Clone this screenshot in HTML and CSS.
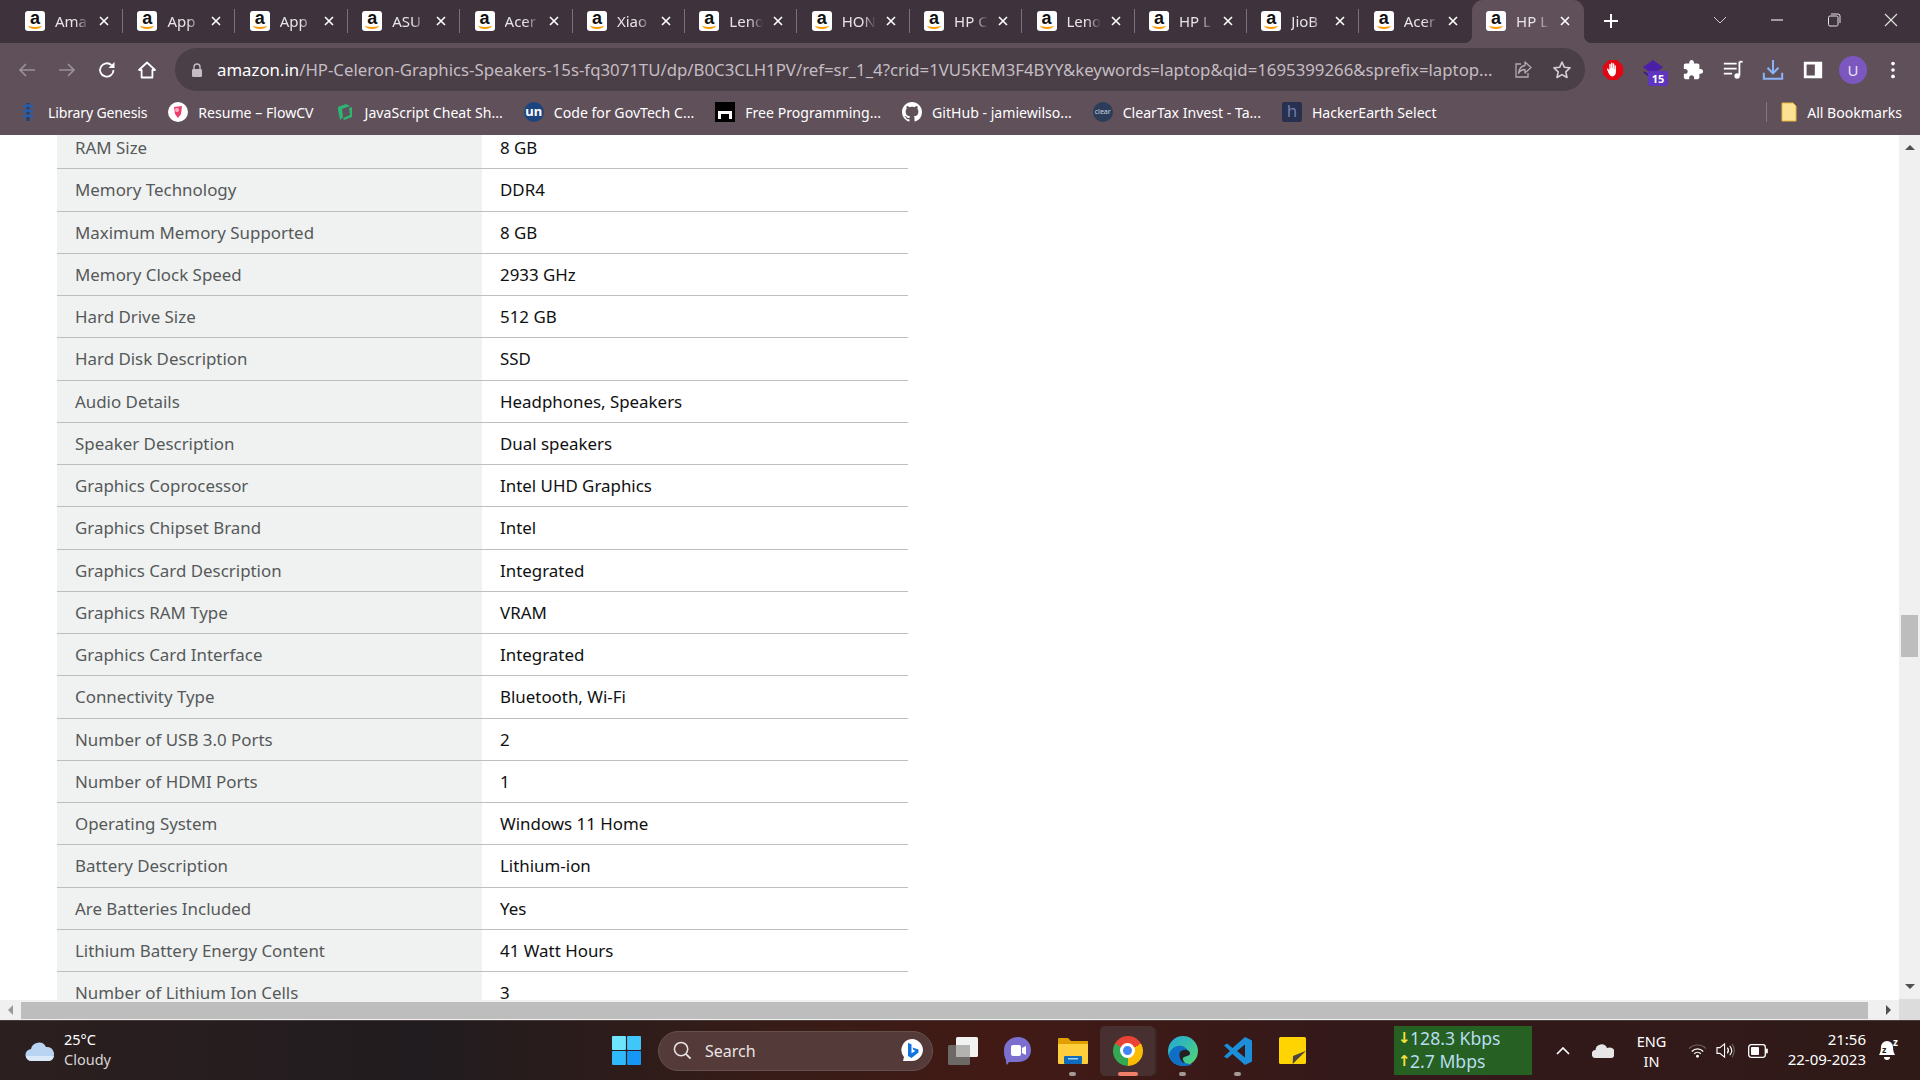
FILE: index.html
```html
<!DOCTYPE html>
<html lang="en">
<head>
    <title>HP Laptop - Technical Details</title>
    <link rel="stylesheet" href="styles.css">
</head>
<body>

    <svg class="sprites" width="0" height="0">
        <symbol id="cross" viewBox="0 0 10 10">
            <path d="M1 1l8 8M9 1l-8 8" stroke="#fff" stroke-width="1.6" fill="none"/>
        </symbol>
    </svg>

    <div class="tabstrip">
        <div class="tab"><div class="tab-icon">a</div><span class="tab-title">Ama</span><svg class="tab-x"><use href="#cross"/></svg></div>
        <div class="tab"><div class="tab-icon">a</div><span class="tab-title">App</span><svg class="tab-x"><use href="#cross"/></svg></div>
        <div class="tab"><div class="tab-icon">a</div><span class="tab-title">App</span><svg class="tab-x"><use href="#cross"/></svg></div>
        <div class="tab"><div class="tab-icon">a</div><span class="tab-title">ASU</span><svg class="tab-x"><use href="#cross"/></svg></div>
        <div class="tab"><div class="tab-icon">a</div><span class="tab-title">Acer</span><svg class="tab-x"><use href="#cross"/></svg></div>
        <div class="tab"><div class="tab-icon">a</div><span class="tab-title">Xiao</span><svg class="tab-x"><use href="#cross"/></svg></div>
        <div class="tab"><div class="tab-icon">a</div><span class="tab-title">Leno</span><svg class="tab-x"><use href="#cross"/></svg></div>
        <div class="tab"><div class="tab-icon">a</div><span class="tab-title">HON</span><svg class="tab-x"><use href="#cross"/></svg></div>
        <div class="tab"><div class="tab-icon">a</div><span class="tab-title">HP C</span><svg class="tab-x"><use href="#cross"/></svg></div>
        <div class="tab"><div class="tab-icon">a</div><span class="tab-title">Leno</span><svg class="tab-x"><use href="#cross"/></svg></div>
        <div class="tab"><div class="tab-icon">a</div><span class="tab-title">HP L</span><svg class="tab-x"><use href="#cross"/></svg></div>
        <div class="tab"><div class="tab-icon">a</div><span class="tab-title">JioB</span><svg class="tab-x"><use href="#cross"/></svg></div>
        <div class="tab no-line"><div class="tab-icon">a</div><span class="tab-title">Acer</span><svg class="tab-x"><use href="#cross"/></svg></div>
        <div class="tab active"><div class="tab-icon">a</div><span class="tab-title">HP L</span><svg class="tab-x"><use href="#cross"/></svg></div>
        <svg class="new-tab" viewBox="0 0 16 16"><path d="M8 1v14M1 8h14" stroke="#fff" stroke-width="2"/></svg>
        <div class="window-btns">
            <svg class="win-btn" viewBox="0 0 14 14"><path d="M1 4l6 6 6-6" stroke="#cfc8cd" fill="none"/></svg>
            <svg class="win-btn" viewBox="0 0 14 14"><path d="M1 7h12" stroke="#e6e2e5" stroke-width="1.2" fill="none"/></svg>
            <svg class="win-btn" viewBox="0 0 14 14"><rect x="1.5" y="3" width="9.5" height="10" rx="1.5" stroke="#e6e2e5" fill="none"/><path d="M4 1h7a2 2 0 012 2v7" stroke="#e6e2e5" fill="none"/></svg>
            <svg class="win-btn" viewBox="0 0 14 14"><path d="M1 1l12 12M13 1L1 13" stroke="#e6e2e5" stroke-width="1.1" fill="none"/></svg>
        </div>
    </div>

    <div class="toolbar">
        <div class="nav-btns">
            <svg class="nav-icon" viewBox="0 0 20 20"><path d="M18 10H3M9 4l-6 6 6 6" stroke="#9b9098" stroke-width="1.7" fill="none"/></svg>
            <svg class="nav-icon" viewBox="0 0 20 20"><path d="M2 10h15M11 4l6 6-6 6" stroke="#9b9098" stroke-width="1.7" fill="none"/></svg>
            <svg class="nav-icon" viewBox="0 0 20 20"><path d="M16.5 10a6.7 6.7 0 11-2-4.8" stroke="#fff" stroke-width="1.8" fill="none"/><path d="M17.5 2v6h-6z" fill="#fff"/></svg>
            <svg class="nav-icon" viewBox="0 0 20 20"><path d="M10 2.5L2 10h2.6v7.5h10.8V10H18z" stroke="#fff" stroke-width="1.8" fill="none" stroke-linejoin="round"/></svg>
        </div>
        <div class="omnibox">
            <svg class="lock" viewBox="0 0 12 14"><path d="M3 6V4a3 3 0 016 0v2" stroke="#c4bdc2" stroke-width="1.4" fill="none"/><rect x="1" y="6" width="10" height="8" rx="1.2" fill="#c4bdc2"/></svg>
            <div class="url"><span class="url-host">amazon.in</span>/HP-Celeron-Graphics-Speakers-15s-fq3071TU/dp/B0C3CLH1PV/ref=sr_1_4?crid=1VU5KEM3F4BYY&amp;keywords=laptop&amp;qid=1695399266&amp;sprefix=laptop...</div>
            <svg class="omni-icon share" viewBox="0 0 20 20"><path d="M8 4H3v13h12v-4" stroke="#b3abb0" stroke-width="1.3" fill="none"/><path d="M12 2l6 5.500-6 5.500V9.500c-3 0-5 1-6.500 4C6 9 8 6 12 5.500z" stroke="#b3abb0" stroke-width="1.3" fill="none" stroke-linejoin="round"/></svg>
            <svg class="omni-icon" viewBox="0 0 20 20"><path d="M10 2l2.400 5.300 5.600.6-4.200 3.900 1.200 5.700L10 14.600 5 17.500l1.200-5.700L2 7.900l5.600-.6z" stroke="#d6d0d4" stroke-width="1.6" fill="none" stroke-linejoin="round"/></svg>
        </div>
        <div class="ext-btns">
            <svg class="ext" viewBox="0 0 24 24"><path d="M7.500 1h9L23 7.500v9L16.500 23h-9L1 16.500v-9z" fill="#e30613"/><path d="M8 17c-1-2-2-4-2.500-5.500-.3-1 1-1.500 1.500-.5l1 1.500V6c0-1.200 1.500-1.200 1.500 0v4h.4V4.800c0-1.200 1.600-1.200 1.600 0V10h.4V5.500c0-1.200 1.500-1.200 1.500 0V11h.4V7.500c0-1 1.400-1 1.400 0V14c0 3-1.500 5-4 5-1.400 0-2.500-.7-3.200-2z" fill="#fff"/></svg>
            <div class="ext ext-stack">
                <svg class="stack-icon" viewBox="0 0 24 24"><path d="M12 1l11 8-11 8L1 9z" fill="#4b1fa8"/><path d="M2 13l10 7 5-3.500V21l-5 2-10-8z" fill="#35169a"/></svg>
                <span class="ext-badge">15</span>
            </div>
            <svg class="ext" viewBox="0 0 24 24"><path fill="#fff" d="M20.500 11H19V7c0-1.100-.9-2-2-2h-4V3.500C13 2.120 11.880 1 10.500 1S8 2.120 8 3.500V5H4c-1.100 0-1.990.9-1.990 2v3.800H3.500c1.490 0 2.700 1.210 2.700 2.700s-1.210 2.700-2.700 2.700H2V20c0 1.100.9 2 2 2h3.800v-1.500c0-1.490 1.210-2.700 2.700-2.700 1.490 0 2.700 1.210 2.700 2.700V22H17c1.100 0 2-.9 2-2v-4h1.500c1.380 0 2.500-1.120 2.500-2.500S21.880 11 20.500 11z"/></svg>
            <svg class="ext" viewBox="0 0 24 24"><path d="M2 5h14M2 10.500h14M2 16h9" stroke="#fff" stroke-width="2" fill="none"/><path d="M19 3v15" stroke="#fff" stroke-width="2"/><path d="M19 3h3.500" stroke="#fff" stroke-width="2"/><circle cx="16.500" cy="18.500" r="3" fill="#fff"/></svg>
            <svg class="ext" viewBox="0 0 24 24"><path d="M12 1v14M6 9.500l6 6 6-6" stroke="#8ab4f8" stroke-width="2.200" fill="none"/><path d="M2 15v6.500h20V15" stroke="#8ab4f8" stroke-width="2.200" fill="none"/></svg>
            <svg class="ext" viewBox="0 0 24 24"><rect x="2" y="3" width="20" height="18" fill="#fff"/><rect x="5" y="6" width="9" height="12" fill="#5f505a"/></svg>
            <div class="ext avatar">U</div>
            <svg class="ext" viewBox="0 0 24 24"><circle cx="12" cy="5" r="2" fill="#fff"/><circle cx="12" cy="12" r="2" fill="#fff"/><circle cx="12" cy="19" r="2" fill="#fff"/></svg>
        </div>
    </div>

    <div class="bookmarks">
        <div class="bm bm-first">
            <svg class="bm-icon" viewBox="0 0 20 20"><path d="M10 1v18" stroke="#1c3f7a" stroke-width="3"/><path d="M5 5c4-3 7-1 10 0M5 10c4-3 7-1 10 0M5 15c4-3 7-1 10 0" stroke="#2a5ea8" stroke-width="2.500" fill="none"/></svg>
            <span>Library Genesis</span>
        </div>
        <div class="bm">
            <svg class="bm-icon" viewBox="0 0 20 20"><circle cx="10" cy="10" r="10" fill="#fff"/><path d="M6 5l8-1-1 8-3 4-3-4z" fill="#ee3e6d"/><circle cx="9" cy="8" r="2" fill="#fbb4c6"/></svg>
            <span>Resume – FlowCV</span>
        </div>
        <div class="bm">
            <svg class="bm-icon" viewBox="0 0 20 20"><path d="M3 5l8-3 4 2-8 3 1 8-3 3-2-10zM17 15l-8 3-1-2 7-3-1-7 3-1z" fill="#2bb673"/></svg>
            <span>JavaScript Cheat Sh...</span>
        </div>
        <div class="bm">
            <div class="bm-icon bm-un">un</div>
            <span>Code for GovTech C...</span>
        </div>
        <div class="bm">
            <svg class="bm-icon" viewBox="0 0 20 20"><rect width="20" height="20" fill="#000"/><path d="M3 9h14v8h-3v-5H6v5H3z" fill="#fff"/></svg>
            <span>Free Programming...</span>
        </div>
        <div class="bm">
            <svg class="bm-icon" viewBox="0 0 16 16"><path fill="#fff" d="M8 0C3.580 0 0 3.580 0 8c0 3.540 2.290 6.530 5.470 7.590.4.070.55-.17.55-.38 0-.19-.01-.82-.01-1.490-2.010.37-2.530-.49-2.690-.94-.09-.23-.48-.94-.82-1.130-.28-.15-.68-.52-.01-.53.63-.01 1.080.58 1.230.82.720 1.210 1.870.87 2.330.66.070-.52.280-.87.510-1.070-1.780-.2-3.640-.89-3.640-3.950 0-.87.310-1.590.820-2.150-.08-.2-.36-1.020.080-2.120 0 0 .670-.21 2.200.82.640-.18 1.320-.27 2-.27.680 0 1.360.090 2 .270 1.530-1.040 2.200-.82 2.200-.82.440 1.100.160 1.920.080 2.120.510.560.820 1.270.820 2.150 0 3.070-1.870 3.750-3.650 3.950.290.250.540.730.540 1.480 0 1.070-.01 1.930-.01 2.200 0 .210.150.460.550.380A8.013 8.013 0 0016 8c0-4.420-3.580-8-8-8z"/></svg>
            <span>GitHub - jamiewilso...</span>
        </div>
        <div class="bm">
            <div class="bm-icon bm-clear">clear</div>
            <span>ClearTax Invest - Ta...</span>
        </div>
        <div class="bm">
            <div class="bm-icon bm-h">h</div>
            <span>HackerEarth Select</span>
        </div>
        <div class="bm bm-all">
            <svg class="bm-folder" viewBox="0 0 16 20"><path d="M1 1h11l3 3v15H1z" fill="#fde293" stroke="#e8b93c"/></svg>
            <span>All Bookmarks</span>
        </div>
    </div>

    <div class="page">
        <div class="page-main">
            <div class="viewport">
                <div class="specs">
                    <div class="spec-row"><div class="spec-name">RAM Size</div><div class="spec-value">8 GB</div></div>
                    <div class="spec-row"><div class="spec-name">Memory Technology</div><div class="spec-value">DDR4</div></div>
                    <div class="spec-row"><div class="spec-name">Maximum Memory Supported</div><div class="spec-value">8 GB</div></div>
                    <div class="spec-row"><div class="spec-name">Memory Clock Speed</div><div class="spec-value">2933 GHz</div></div>
                    <div class="spec-row"><div class="spec-name">Hard Drive Size</div><div class="spec-value">512 GB</div></div>
                    <div class="spec-row"><div class="spec-name">Hard Disk Description</div><div class="spec-value">SSD</div></div>
                    <div class="spec-row"><div class="spec-name">Audio Details</div><div class="spec-value">Headphones, Speakers</div></div>
                    <div class="spec-row"><div class="spec-name">Speaker Description</div><div class="spec-value">Dual speakers</div></div>
                    <div class="spec-row"><div class="spec-name">Graphics Coprocessor</div><div class="spec-value">Intel UHD Graphics</div></div>
                    <div class="spec-row"><div class="spec-name">Graphics Chipset Brand</div><div class="spec-value">Intel</div></div>
                    <div class="spec-row"><div class="spec-name">Graphics Card Description</div><div class="spec-value">Integrated</div></div>
                    <div class="spec-row"><div class="spec-name">Graphics RAM Type</div><div class="spec-value">VRAM</div></div>
                    <div class="spec-row"><div class="spec-name">Graphics Card Interface</div><div class="spec-value">Integrated</div></div>
                    <div class="spec-row"><div class="spec-name">Connectivity Type</div><div class="spec-value">Bluetooth, Wi-Fi</div></div>
                    <div class="spec-row"><div class="spec-name">Number of USB 3.0 Ports</div><div class="spec-value">2</div></div>
                    <div class="spec-row"><div class="spec-name">Number of HDMI Ports</div><div class="spec-value">1</div></div>
                    <div class="spec-row"><div class="spec-name">Operating System</div><div class="spec-value">Windows 11 Home</div></div>
                    <div class="spec-row"><div class="spec-name">Battery Description</div><div class="spec-value">Lithium-ion</div></div>
                    <div class="spec-row"><div class="spec-name">Are Batteries Included</div><div class="spec-value">Yes</div></div>
                    <div class="spec-row"><div class="spec-name">Lithium Battery Energy Content</div><div class="spec-value">41 Watt Hours</div></div>
                    <div class="spec-row"><div class="spec-name">Number of Lithium Ion Cells</div><div class="spec-value">3</div></div>
                </div>
            </div>
            <div class="hscroll">
                <div class="arrow arrow-left"></div>
                <div class="hthumb"></div>
                <div class="arrow arrow-right"></div>
            </div>
        </div>
        <div class="vscroll">
            <div class="arrow arrow-up"></div>
            <div class="vthumb"></div>
            <div class="arrow arrow-down"></div>
            <div class="corner"></div>
        </div>
    </div>

    <div class="taskbar">
        <div class="weather">
            <svg class="weather-icon" viewBox="0 0 30 20"><path d="M7 20a6 6 0 01-1-12 8 8 0 0115-2 7 7 0 012 14z" fill="#b9d3f3"/><path d="M7 20a6 6 0 01-6-5h28a6 6 0 01-6 5z" fill="#dbe8f8"/></svg>
            <div class="weather-text">
                <div class="temp">25°C</div>
                <div class="cond">Cloudy</div>
            </div>
        </div>
        <svg class="start" viewBox="0 0 30 30">
            <rect width="14.400" height="14.400" rx="1" fill="#6ee4ff"/>
            <rect x="15.600" width="14.400" height="14.400" rx="1" fill="#3fc6fb"/>
            <rect y="15.600" width="14.400" height="14.400" rx="1" fill="#2fb8fa"/>
            <rect x="15.600" y="15.600" width="14.400" height="14.400" rx="1" fill="#1497f5"/>
        </svg>
        <div class="search">
            <svg class="search-icon" viewBox="0 0 20 20"><circle cx="8.500" cy="8.500" r="7" stroke="#e8e4e4" stroke-width="1.600" fill="none"/><path d="M13.500 13.500l5 5" stroke="#e8e4e4" stroke-width="1.800"/></svg>
            <span class="search-text">Search</span>
            <svg class="bing" viewBox="0 0 24 26"><path d="M12 1a11 11 0 0110.500 14A11 11 0 0112 23H3l1-4A11 11 0 0112 1z" fill="#fff"/><path d="M8 5l3.500 1.200v9l4-2.200-2-1-1-2.500 6 2v3L11.500 20 8 18z" fill="#1273de"/></svg>
        </div>
        <div class="apps">
            <div class="app">
                <svg class="app-icon" viewBox="0 0 30 30"><rect x="0" y="9" width="22" height="20" rx="1.500" fill="#6b6866"/><rect x="8" y="1" width="22" height="20" rx="1.500" fill="#f2f2f2"/><rect x="8" y="9" width="14" height="12" fill="#b4b2b0"/></svg>
            </div>
            <div class="app">
                <svg class="app-icon" viewBox="0 0 30 30"><path d="M15 1c8 0 13 6 13 13 0 8-6 12-13 12H6l-2 3c-1-1-1-3-1-5C1 21 1 17 1 14 1 7 7 1 15 1z" fill="#7b6fd0"/><rect x="8" y="9" width="10" height="11" rx="2" fill="#fff"/><path d="M19 12l4-2v9l-4-2z" fill="#fff"/></svg>
            </div>
            <div class="app">
                <svg class="app-icon" viewBox="0 0 30 30"><path d="M0 3a1 1 0 011-1h9l3 3h17v5H0z" fill="#e0a100"/><path d="M0 8h30v19a1 1 0 01-1 1H1a1 1 0 01-1-1z" fill="#ffce3c"/><rect x="6" y="20" width="18" height="8" rx="1" fill="#0f6cbd"/><rect x="10" y="22" width="10" height="1.500" fill="#9fd3f6"/></svg>
                <span class="app-dot"></span>
            </div>
            <div class="app app-active">
                <div class="chrome-icon"><div class="chrome-eye"></div></div>
                <span class="app-dot app-dot-on"></span>
            </div>
            <div class="app">
                <svg class="app-icon" viewBox="0 0 30 30"><defs><linearGradient id="edgeTop" x1="0" y1="0" x2="1" y2="1"><stop offset="0" stop-color="#1fa8dc"/><stop offset="1" stop-color="#55d66f"/></linearGradient></defs><circle cx="15" cy="15" r="15" fill="url(#edgeTop)"/><path d="M1 19C3 9 14 7 19 13c1 2 0 4-2 5-4 2-4 5-1 8 2 2 6 2 8 2-3 2-6 2-9 2C8 30 2 26 1 19z" fill="#0f6fc6"/><path d="M12 16c3-3 9-3 10 1 .5 3-4 3-6 4-2 1-1 4 1 6-4 0-7-7-5-11z" fill="#272023"/></svg>
                <span class="app-dot"></span>
            </div>
            <div class="app">
                <svg class="app-icon" viewBox="0 0 30 30"><path fill-rule="evenodd" fill="#1b8fd9" d="M22 1l7 3.500v21L22 29 9.500 18l-5.500 4.500-3-2L7 15 1 9.500l3-2L9.500 12zM22 8.500L14 15l8 6.500z"/></svg>
                <span class="app-dot"></span>
            </div>
            <div class="app">
                <svg class="app-icon sticky" viewBox="0 0 27 27"><rect width="27" height="27" rx="1.500" fill="#ffd400"/><path d="M13.700 27L14 19l13-5.200z" fill="#4a4540"/></svg>
            </div>
        </div>
        <div class="netmeter">
            <div class="net-line"><span class="net-arrow">↓</span>128.3 Kbps</div>
            <div class="net-line"><span class="net-arrow">↑</span>2.7 Mbps</div>
        </div>
        <div class="tray">
            <div class="tray-slot slot-caret"><svg class="tray-icon caret" viewBox="0 0 14 8"><path d="M1 7l6-6 6 6" stroke="#fff" stroke-width="1.700" fill="none"/></svg></div>
            <div class="tray-slot slot-cloud"><svg class="onedrive" viewBox="0 0 22 14"><path d="M4 14a4 4 0 01-.5-8A6 6 0 0115 4a4.500 4.500 0 015 10z" fill="#e6e6e6"/></svg></div>
            <div class="tray-slot slot-lang"><div>ENG</div><div>IN</div></div>
            <div class="tray-slot slot-wifi"><svg class="tray-icon" viewBox="0 0 20 16"><path d="M1 6c5-5 13-5 18 0" stroke="#6e6462" stroke-width="1.200" fill="none"/><path d="M4 9c3.500-3.500 8.500-3.500 12 0M6.500 11.500c2-2 5-2 7 0" stroke="#fff" stroke-width="1.400" fill="none"/><circle cx="10" cy="14" r="1.500" fill="#fff"/></svg></div>
            <div class="tray-slot slot-sound"><svg class="tray-icon" viewBox="0 0 20 18"><path d="M1 6h3l5-4v14l-5-4H1z" stroke="#fff" stroke-width="1.200" fill="none"/><path d="M12 6c1.500 2 1.500 4 0 6M14.500 4c2.500 3 2.500 7 0 10" stroke="#fff" stroke-width="1.200" fill="none"/><path d="M17 2c3 4 3 10 0 14" stroke="#6e6462" stroke-width="1.200" fill="none"/></svg></div>
            <div class="tray-slot slot-battery"><svg class="tray-icon battery" viewBox="0 0 20 14"><rect x=".7" y=".7" width="16.600" height="12.600" rx="2.500" stroke="#fff" stroke-width="1.300" fill="none"/><rect x="3" y="3" width="8" height="8" rx=".8" fill="#fff"/><rect x="18" y="4.500" width="1.800" height="5" rx=".8" fill="#fff"/></svg></div>
            <div class="clock"><div>21:56</div><div>22-09-2023</div></div>
            <div class="tray-slot slot-bell"><svg class="bell" viewBox="0 0 18 20"><path d="M9 1a6 6 0 00-6 6c0 4-1 6-2 8h16c-1-2-2-4-2-8a6 6 0 00-6-6z" fill="#fff"/><path d="M6 17h6a3 3 0 01-6 0z" fill="#fff"/></svg><span class="bell-z">z</span><span class="bell-z2">z</span></div>
        </div>
    </div>

</body>
</html>
```

FILE: styles.css
```css
* {
    box-sizing: border-box;
}

html, body {
    margin: 0;
    height: 100%;
    overflow: hidden;
}

body {
    display: flex;
    flex-direction: column;
    width: 1920px;
    height: 1080px;
    font-family: "Noto Sans", "Open Sans", sans-serif;
    background: white;
}

.sprites {
    position: absolute;
}

/* tab strip */
.tabstrip {
    display: flex;
    align-items: stretch;
    height: 43px;
    padding-left: 10.6px;
    background: #3e333c;
    flex: none;
}

.tab {
    position: relative;
    display: flex;
    align-items: center;
    width: 112.4px;
    height: 43px;
    padding: 0 0 1px 14.4px;
    flex: none;
}

.tab::after {
    content: "";
    position: absolute;
    right: 0;
    top: 9px;
    width: 1px;
    height: 24px;
    background: #7d7179;
}

.tab.no-line::after {
    display: none;
}

.tab.active {
    background: #5f505a;
    border-radius: 11px 11px 0 0;
}

.tab.active::before, .tab.active::after {
    content: "";
    display: block;
    position: absolute;
    top: auto;
    bottom: 0;
    width: 8px;
    height: 8px;
    background: radial-gradient(circle at 0 0, transparent 8px, #5f505a 8.5px);
}

.tab.active::before {
    left: -8px;
}

.tab.active::after {
    right: -8px;
    background: radial-gradient(circle at 100% 0, transparent 8px, #5f505a 8.5px);
}

.tab-icon {
    position: relative;
    width: 20px;
    height: 20px;
    border-radius: 3px;
    background: #fff;
    color: #111;
    font-family: "Liberation Sans", sans-serif;
    font-size: 18px;
    font-weight: 700;
    line-height: 15px;
    text-align: center;
    flex: none;
}

.tab-icon::after {
    content: "";
    position: absolute;
    left: 3px;
    right: 3px;
    bottom: 2px;
    height: 5px;
    border-bottom: 2px solid #f90;
    border-radius: 50%;
}

.tab-title {
    width: 34px;
    margin-left: 10px;
    overflow: hidden;
    white-space: nowrap;
    color: #e8e4e7;
    font-size: 15px;
    -webkit-mask-image: linear-gradient(90deg, black 60%, transparent);
    mask-image: linear-gradient(90deg, black 60%, transparent);
}

.tab-x {
    width: 10px;
    height: 10px;
    margin-left: 10px;
    flex: none;
}

.new-tab {
    width: 16px;
    height: 16px;
    margin: 13px 0 0 19px;
    flex: none;
}

.window-btns {
    display: flex;
    margin-left: 93.5px;
    gap: 43px;
}

.win-btn {
    width: 14px;
    height: 14px;
    margin-top: 12.5px;
}

/* toolbar */
.toolbar {
    display: flex;
    align-items: center;
    height: 48px;
    padding-top: 5px;
    background: #5f505a;
    flex: none;
}

.nav-btns {
    display: flex;
    gap: 20px;
    width: 175px;
    padding-left: 17px;
}

.nav-icon {
    width: 20px;
    height: 20px;
}

.omnibox {
    display: flex;
    align-items: center;
    width: 1410px;
    height: 43px;
    padding-left: 16px;
    border-radius: 22px;
    background: #4a3e47;
}

.lock {
    width: 12px;
    height: 14px;
    flex: none;
}

.url {
    width: 1276px;
    margin-left: 14px;
    color: #c4bdc2;
    font-size: 16.8px;
    white-space: nowrap;
    flex: none;
}

.url-host {
    color: #fff;
}

.omni-icon {
    width: 20px;
    height: 20px;
    flex: none;
    margin-left: 19px;
}

.share {
    margin-left: 20px;
}

.ext-btns {
    display: flex;
    align-items: center;
    gap: 18px;
    margin-left: 17px;
}

.ext {
    width: 22px;
    height: 22px;
    flex: none;
}

.ext-stack {
    position: relative;
}

.stack-icon {
    width: 22px;
    height: 22px;
}

.ext-badge {
    position: absolute;
    left: 6px;
    top: 12px;
    width: 20px;
    height: 15px;
    border-radius: 2px;
    background: #5d35c0;
    color: #fff;
    font-size: 11px;
    font-weight: 700;
    line-height: 15px;
    text-align: center;
}

.avatar {
    width: 28px;
    height: 28px;
    margin: 0 -3px;
    border-radius: 50%;
    background: #7c57c0;
    color: #e8e0f5;
    font-size: 15px;
    line-height: 28px;
    text-align: center;
}

/* bookmarks */
.bookmarks {
    display: flex;
    align-items: center;
    gap: 21px;
    height: 44px;
    padding: 0 0 2px 18px;
    background: #5f505a;
    color: #fff;
    font-size: 14.1px;
    flex: none;
}

.bm {
    display: flex;
    align-items: center;
    gap: 10px;
    white-space: nowrap;
    flex: none;
}

.bm-first {
    letter-spacing: -0.17px;
}

.bm-icon {
    width: 20px;
    height: 20px;
    flex: none;
}

.bm-un {
    border-radius: 50%;
    background: #1c4580;
    font-size: 13px;
    font-weight: 700;
    line-height: 19px;
    text-align: center;
}

.bm-clear {
    border-radius: 50%;
    background: #2b3d58;
    color: #cfd6e0;
    font-size: 7px;
    line-height: 20px;
    text-align: center;
}

.bm-h {
    border-radius: 2px;
    background: #27304f;
    color: #6d7ca8;
    font-size: 17px;
    line-height: 18px;
    text-align: center;
}

.bm-all {
    margin-left: auto;
    height: 20px;
    margin-right: 18px;
    padding-left: 14px;
    border-left: 1px solid #85797f;
}

.bm-folder {
    width: 16px;
    height: 20px;
}

/* page */
.page {
    display: flex;
    height: 885px;
    flex: none;
}

.page-main {
    display: flex;
    flex-direction: column;
    width: 1899px;
    flex: none;
}

.viewport {
    height: 865px;
    overflow: hidden;
    background: white;
    flex: none;
}

.specs {
    width: 851px;
    margin: -8px 0 0 57px;
    font-size: 16.9px;
}

.spec-row {
    display: grid;
    grid-template-columns: 425px 426px;
    height: 42.25px;
    border-bottom: 1px solid #bbbfbf;
}

.spec-name {
    display: flex;
    align-items: center;
    padding-left: 18px;
    background: #f0f2f2;
    color: #565959;
}

.spec-value {
    display: flex;
    align-items: center;
    padding-left: 18px;
    color: #0f1111;
}

.hscroll {
    display: flex;
    align-items: center;
    height: 20px;
    background: #f0f0f0;
    flex: none;
}

.hthumb {
    width: 1847px;
    height: 17px;
    margin-left: 8px;
    background: #bdbdbd;
}

.vscroll {
    display: flex;
    flex-direction: column;
    align-items: center;
    width: 21px;
    background: #f0f0f0;
    flex: none;
}

.vthumb {
    width: 17px;
    height: 42px;
    margin-top: 465px;
    background: #bdbdbd;
}

.corner {
    width: 21px;
    height: 21px;
    margin-top: auto;
    background: #dcdcdc;
}

.arrow {
    width: 0;
    height: 0;
    flex: none;
}

.arrow-up {
    margin-top: 10px;
    border-left: 5px solid transparent;
    border-right: 5px solid transparent;
    border-bottom: 5px solid #505050;
}

.arrow-down {
    margin-top: 327px;
    border-left: 5px solid transparent;
    border-right: 5px solid transparent;
    border-top: 5px solid #505050;
}

.arrow-left {
    margin-left: 8px;
    border-top: 5px solid transparent;
    border-bottom: 5px solid transparent;
    border-right: 5px solid #9a9a9a;
}

.arrow-right {
    margin-left: 18px;
    border-top: 5px solid transparent;
    border-bottom: 5px solid transparent;
    border-left: 5px solid #505050;
}

/* taskbar */
.taskbar {
    display: flex;
    align-items: center;
    height: 60px;
    border-top: 1px solid #4a3c3a;
    background: linear-gradient(90deg, #2c1f1f 0%, #211c1f 22%, #371c17 40%, #421a15 52%, #34191a 70%, #2f1a18 100%);
    color: #fff;
    flex: none;
}

.weather {
    display: flex;
    align-items: center;
    width: 612px;
    padding-left: 25px;
    flex: none;
}

.weather-icon {
    width: 30px;
    height: 20px;
    flex: none;
}

.weather-text {
    margin: -4px 0 0 9px;
    font-size: 14.5px;
    line-height: 20px;
}

.cond {
    color: #d8d4d4;
}

.start {
    width: 29px;
    height: 29px;
    flex: none;
}

.search {
    display: flex;
    align-items: center;
    width: 275px;
    height: 40px;
    margin-left: 17px;
    padding-left: 14px;
    border: 1px solid #66504e;
    border-radius: 20px;
    background: #553a3a;
    flex: none;
}

.search-icon {
    width: 19px;
    height: 19px;
    flex: none;
}

.search-text {
    margin-left: 13px;
    color: #e8e4e4;
    font-size: 16px;
}

.bing {
    width: 24px;
    height: 26px;
    margin-left: auto;
    margin-right: 8px;
}

.apps {
    display: flex;
    margin-left: 2px;
    flex: none;
}

.app {
    position: relative;
    display: flex;
    align-items: center;
    justify-content: center;
    width: 55px;
    height: 50px;
    flex: none;
}

.app-active {
    border-radius: 5px;
    background: #47302f;
    box-shadow: 3px 0 0 -1px #3a2624;
}

.app-icon {
    width: 30px;
    height: 30px;
}

.app-icon.sticky {
    width: 27px;
    height: 27px;
}

.app-dot {
    position: absolute;
    left: 50%;
    bottom: 0;
    width: 7px;
    height: 4px;
    margin-left: -3.5px;
    border-radius: 2px;
    background: #a39a98;
}

.app-dot-on {
    width: 20px;
    margin-left: -10px;
    background: #f0806a;
}

.chrome-icon {
    display: flex;
    align-items: center;
    justify-content: center;
    width: 30px;
    height: 30px;
    border-radius: 50%;
    background: conic-gradient(from -60deg, #ea4335 0 120deg, #fbbc04 120deg 240deg, #34a853 240deg 360deg);
}

.chrome-eye {
    width: 15px;
    height: 15px;
    border: 3px solid #fff;
    border-radius: 50%;
    background: #4285f4;
}

.netmeter {
    width: 138px;
    height: 49px;
    margin-left: 74px;
    padding: 1px 0 0 4px;
    background: #266022;
    color: #b8dcf0;
    font-size: 17.6px;
    line-height: 23px;
    flex: none;
}

.net-line {
    display: flex;
    height: 23px;
}

.net-arrow {
    width: 12px;
    color: #f4e23c;
    font-family: "DejaVu Sans", sans-serif;
    font-size: 15px;
    font-weight: 700;
    flex: none;
}

.tray {
    display: flex;
    align-items: center;
    margin-left: 12px;
    flex: none;
}

.tray-slot {
    display: flex;
    align-items: center;
    justify-content: center;
    flex: none;
}

.slot-caret {
    width: 38px;
}

.slot-cloud {
    width: 42px;
}

.slot-lang {
    flex-direction: column;
    width: 55px;
    font-size: 14.5px;
    line-height: 20px;
}

.slot-wifi {
    width: 36px;
}

.slot-sound {
    width: 20px;
}

.slot-battery {
    width: 46px;
}

.tray-icon {
    width: 19px;
    height: 17px;
}

.caret {
    width: 14px;
    height: 8px;
}

.battery {
    width: 20px;
    height: 14px;
}

.onedrive {
    width: 22px;
    height: 14px;
}

.clock {
    width: 85px;
    margin: -3px -1px 0 0;
    font-size: 15px;
    line-height: 20px;
    text-align: right;
    white-space: nowrap;
    flex: none;
}

.slot-bell {
    position: relative;
    width: 44px;
}

.bell {
    width: 18px;
    height: 20px;
    margin-top: -2px;
}

.bell-z {
    position: absolute;
    left: 17px;
    top: 3px;
    color: #2c1a18;
    font-size: 9px;
    font-weight: 700;
    line-height: 10px;
}

.bell-z2 {
    position: absolute;
    left: 28px;
    top: -5px;
    color: #fff;
    font-size: 10px;
    font-weight: 700;
    line-height: 10px;
}
```
